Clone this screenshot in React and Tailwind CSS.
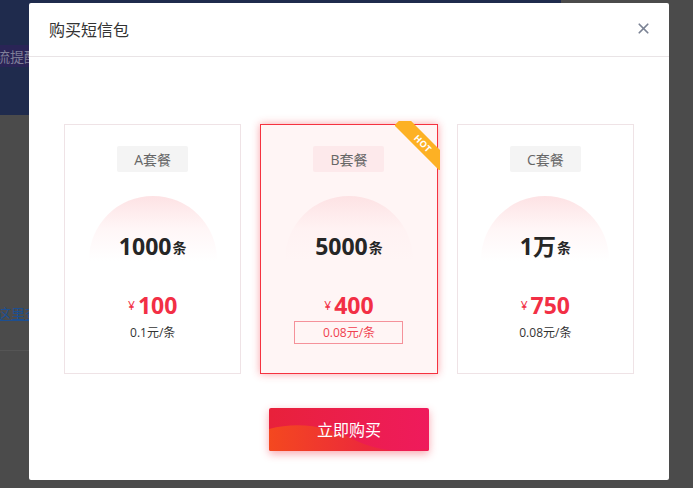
import { X } from "lucide-react";

const plans = [
  { name: "A套餐", count: "1000", unit: "条", price: "100", per: "0.1元/条" },
  { name: "B套餐", count: "5000", unit: "条", price: "400", per: "0.08元/条", hot: true },
  { name: "C套餐", count: "1万", unit: "条", price: "750", per: "0.08元/条" },
];

const font = { fontFamily: '"Open Sans", "Noto Sans CJK SC", sans-serif' };

function PlanCard({ plan }) {
  const active = plan.hot;
  return (
    <div
      className={
        "relative flex-1 h-[250px] flex flex-col items-center pt-[21px] border " +
        (active
          ? "border-[#f5323f] bg-[#fff5f5] shadow-[0_0_8px_rgba(245,50,63,0.45)]"
          : "border-[#efe3e6] bg-white")
      }
    >
      {active && (
        <div className="absolute top-[-4px] right-[-3px] w-[45px] h-[49px] overflow-hidden">
          <div className="absolute top-[15px] right-[-16px] w-[66px] h-[15px] rotate-45 bg-[#fdb124] text-white text-[9px] font-bold flex items-center justify-center tracking-[0.5px]">
            HOT
          </div>
        </div>
      )}
      <div
        className={
          "w-[71px] h-[26px] rounded-[2px] flex items-center justify-center text-[14px] text-[#666]" +
          (active ? " bg-[#fde9eb]" : " bg-[#f4f4f4]")
        }
      >
        {plan.name}
      </div>
      <div className="mt-[24px] w-[128px] h-[65px] rounded-t-full bg-gradient-to-b from-[#fde2e4] via-[#fff0f1]/60 to-transparent flex items-end justify-center">
        <span className="text-[23px] font-bold text-[#262626] leading-[28px] translate-y-[-1px]">
          {plan.count}
        </span>
        <span className="text-[14px] font-bold text-[#262626] leading-[20px] mb-[3px] ml-[1px]">
          {plan.unit}
        </span>
      </div>
      <div className="mt-[29px] flex items-end text-[#f22f45] leading-none h-[30px]">
        <span className="text-[12px] mb-[8px] mr-[3px]">¥</span>
        <span className="text-[23px] font-bold leading-[30px]">{plan.price}</span>
      </div>
      <div
        className={
          "mt-[1px] h-[23px] flex items-center justify-center text-[12px]" +
          (active ? " w-[109px] border border-[#f5919a] text-[#f0404f]" : " text-[#333]")
        }
      >
        {plan.per}
      </div>
    </div>
  );
}

export default function App() {
  return (
    <div className="relative w-[693px] h-[488px] overflow-hidden bg-[#4b4b4b]" style={font}>
      {/* masked page behind */}
      <div className="w-[561px] h-[115px] bg-[#1f2b4d] pt-[45px]">
        <div className="h-[22px] bg-[#2a2456] flex items-center text-[14px] text-[#7f7f98] -ml-[4px]">
          流提醒
        </div>
      </div>
      <div className="pt-[188px] -ml-[3px] text-[14px] text-[#1d4f91] underline">这里查</div>
      <div className="mt-[26px] h-px w-[40px] bg-[#555]" />

      {/* dialog */}
      <div className="absolute left-[29px] top-[3px] w-[640px] h-[477px] bg-white rounded-[2px] flex flex-col">
        <div className="h-[54px] border-b border-[#e9e4e6] flex items-center justify-between pl-[20px] pr-[17px]">
          <span className="text-[16px] text-[#333]">购买短信包</span>
          <X size={17} strokeWidth={2.4} className="text-[#7b8294] -mt-[3px]" />
        </div>
        <div className="flex gap-[19px] px-[35px] pt-[67px]">
          {plans.map((p) => (
            <PlanCard key={p.name} plan={p} />
          ))}
        </div>
        <div className="flex justify-center mt-[34px]">
          <button className="relative w-[160px] h-[43px] rounded-[2px] overflow-hidden bg-gradient-to-r from-[#e8213a] to-[#ef1a5c] shadow-[0_3px_8px_rgba(240,40,60,0.4)] text-white text-[16px]">
            <svg className="absolute left-0 bottom-0" width="160" height="43" viewBox="0 0 160 43">
              <defs>
                <linearGradient id="wave" x1="0" y1="0" x2="1" y2="0">
                  <stop offset="0" stopColor="#f4481f" />
                  <stop offset="0.6" stopColor="#ec2a3a" />
                  <stop offset="1" stopColor="#ee1c55" />
                </linearGradient>
              </defs>
              <path d="M0 21 C 30 13, 60 18, 90 34 C 115 45, 140 44, 160 40 L160 43 L0 43 Z" fill="url(#wave)" />
            </svg>
            <span className="relative">立即购买</span>
          </button>
        </div>
      </div>
    </div>
  );
}
